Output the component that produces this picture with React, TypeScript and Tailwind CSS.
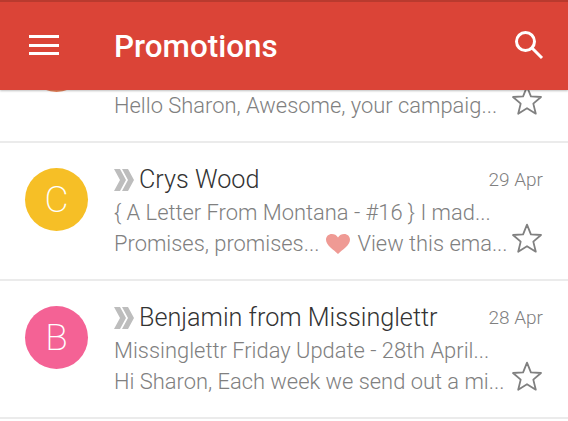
import type { ReactNode } from "react";

interface Mail {
  letter: string;
  color: string;
  sender: string;
  date: string;
  subject: string;
  preview: ReactNode;
}

function StarIcon() {
  return (
    <svg width="32" height="32" viewBox="0 0 32 32" className="-mt-[6px] shrink-0">
      <path
        d="M16 2.6 L19.9 12.3 L30 13 L22.3 19.6 L24.8 29.7 L16 24.2 L7.2 29.7 L9.7 19.6 L2 13 L12.1 12.3 Z"
        fill="none"
        stroke="#808080"
        strokeWidth="1.8"
        strokeLinejoin="round"
      />
    </svg>
  );
}

function Chevrons() {
  return (
    <svg width="20" height="22" viewBox="0 0 20 22" className="shrink-0">
      <path d="M0 0 H6 L12 11 L6 22 H0 L6 11 Z" fill="#bdbdbd" />
      <path d="M8 0 H14 L20 11 L14 22 H8 L14 11 Z" fill="#bdbdbd" />
    </svg>
  );
}

function Heart() {
  return (
    <svg width="24" height="20" viewBox="0 0 24 20" className="mx-[7px] inline-block align-[-3px]">
      <path
        d="M12 20 C8 16 0 11.5 0 5.8 C0 2.4 2.6 0 5.8 0 C8.4 0 10.6 1.2 12 3.4 C13.4 1.2 15.6 0 18.2 0 C21.4 0 24 2.4 24 5.8 C24 11.5 16 16 12 20 Z"
        fill="#ef9a94"
      />
    </svg>
  );
}

const mails: Mail[] = [
  {
    letter: "C",
    color: "bg-[#f6bf26]",
    sender: "Crys Wood",
    date: "29 Apr",
    subject: "{ A Letter From Montana - #16 } I mad...",
    preview: (
      <>
        Promises, promises...
        <Heart />
        View this ema...
      </>
    ),
  },
  {
    letter: "B",
    color: "bg-[#f46295]",
    sender: "Benjamin from Missinglettr",
    date: "28 Apr",
    subject: "Missinglettr Friday Update - 28th April...",
    preview: "Hi Sharon, Each week we send out a mi...",
  },
];

export default function App() {
  return (
    <div
      className="h-[421px] w-[568px] overflow-hidden bg-white"
      style={{ fontFamily: "Roboto, sans-serif" }}
    >
      {/* App bar */}
      <header className="relative z-10 flex h-[90px] items-center border-t-2 border-[#b93a2e] bg-[#db4437] pb-[2px] pl-[29px] pr-[24px] text-white shadow-[0_1px_2px_rgba(0,0,0,0.25)]">
        <div className="flex h-[20px] w-[30px] flex-col justify-between">
          <div className="h-[3px] bg-white" />
          <div className="h-[3px] bg-white" />
          <div className="h-[3px] bg-white" />
        </div>
        <h1 className="ml-[55px] mt-[3px] flex-1 text-[31.4px] font-medium leading-none">Promotions</h1>
        <svg width="30" height="30" viewBox="0 0 30 30" fill="none" stroke="white" strokeWidth="3">
          <circle cx="11.5" cy="11.5" r="9" />
          <path d="M18 18 L28 28" />
        </svg>
      </header>

      <main className="-mt-[86px]">
        {/* Row scrolled under the app bar */}
        <div className="flex h-[139px] border-b-2 border-[#ebebeb] pl-[25px] pr-[25px]">
          <div className="mt-[25px] h-[63px] w-[63px] shrink-0 rounded-full bg-[#f0845c]" />
          <div className="ml-[26px] flex min-w-0 flex-1 items-start justify-between pt-[86px]">
            <p className="text-[21.9px] font-light leading-[31px] text-[#808080]">
              Hello Sharon, Awesome, your campaig...
            </p>
            <StarIcon />
          </div>
        </div>

        {mails.map((mail) => (
          <div
            key={mail.sender}
            className="flex h-[138px] border-b-2 border-[#ebebeb] pl-[25px] pr-[25px]"
          >
            <div
              className={`mt-[25px] flex h-[63px] w-[63px] shrink-0 items-center justify-center rounded-full text-[37px] font-extralight text-white ${mail.color}`}
            >
              {mail.letter}
            </div>
            <div className="ml-[26px] min-w-0 flex-1 pt-[21px]">
              <div className="flex h-[32px] items-center">
                <Chevrons />
                <span className="ml-[5px] flex-1 text-[25.2px] font-light leading-none text-[#333333]">
                  {mail.sender}
                </span>
                <span className="text-[19px] font-light text-[#808080]">{mail.date}</span>
              </div>
              <p className="mt-[1px] text-[21.9px] font-light leading-[31px] text-[#808080]">
                {mail.subject}
              </p>
              <div className="flex items-start justify-between">
                <p className="text-[21.9px] font-light leading-[31px] text-[#808080]">
                  {mail.preview}
                </p>
                <StarIcon />
              </div>
            </div>
          </div>
        ))}
      </main>
    </div>
  );
}
